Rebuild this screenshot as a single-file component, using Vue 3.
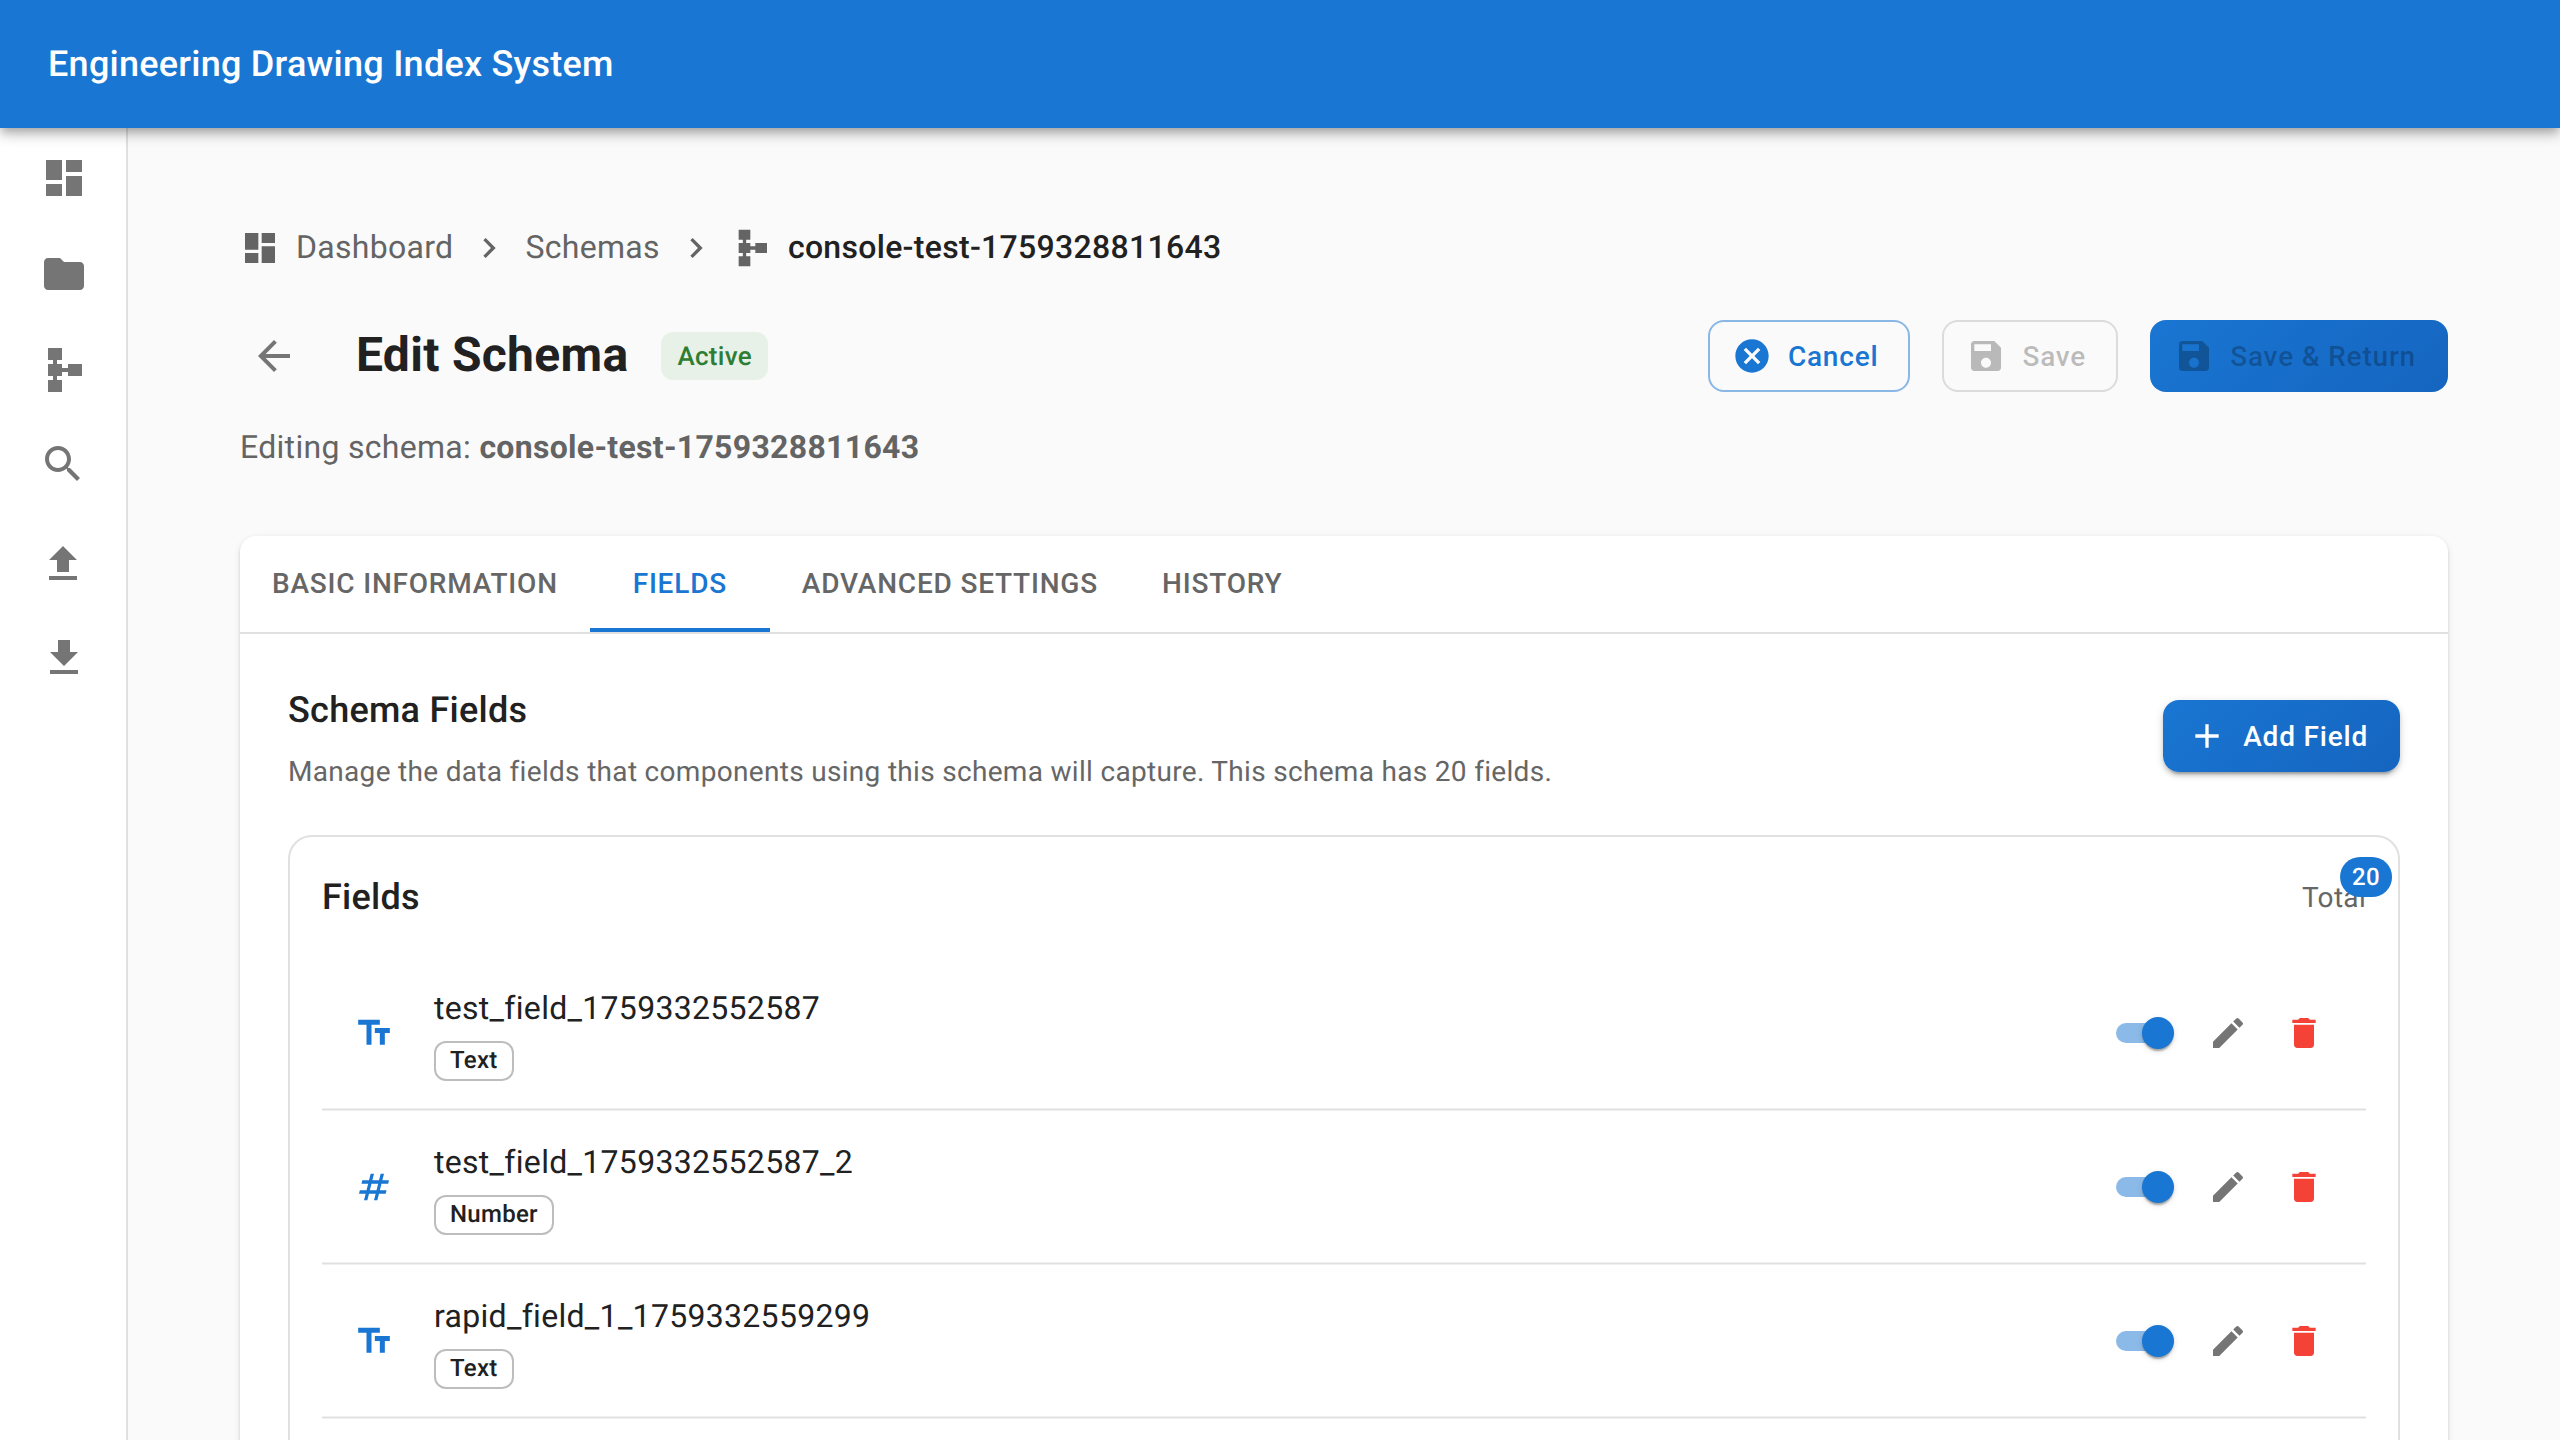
<script setup>
import { ref } from 'vue'

const icons = {
  dashboard: 'M3 13h8V3H3v10zm0 8h8v-6H3v6zm10 0h8V11h-8v10zm0-18v6h8V3h-8z',
  folder: 'M10 4H4c-1.1 0-1.99.9-1.99 2L2 18c0 1.1.9 2 2 2h16c1.1 0 2-.9 2-2V8c0-1.1-.9-2-2-2h-8l-2-2z',
  schema: 'M14 9v2h-3V9H8.5V7H11V1H4v6h2.5v2H4v6h2.5v2H4v6h7v-6H8.5v-2H11v-2h3v2h7V9h-7z',
  search: 'M15.5 14h-.79l-.28-.27C15.41 12.59 16 11.11 16 9.5 16 5.91 13.09 3 9.5 3S3 5.91 3 9.5 5.91 16 9.5 16c1.61 0 3.09-.59 4.23-1.57l.27.28v.79l5 4.99L20.49 19l-4.99-5zm-6 0C7.01 14 5 11.99 5 9.5S7.01 5 9.5 5 14 7.01 14 9.5 11.99 14 9.5 14z',
  upload: 'M5 20h14v-2H5v2zM5 10h4v6h6v-6h4l-7-7-7 7z',
  download: 'M19 9h-4V3H9v6H5l7 7 7-7zM5 18v2h14v-2H5z',
  chevron: 'M10 6 8.59 7.41 13.17 12l-4.58 4.59L10 18l6-6z',
  back: 'M20 11H7.83l5.59-5.59L12 4l-8 8 8 8 1.41-1.41L7.83 13H20v-2z',
  cancel: 'M12 2C6.47 2 2 6.47 2 12s4.47 10 10 10 10-4.47 10-10S17.53 2 12 2zm5 13.59L15.59 17 12 13.41 8.41 17 7 15.59 10.59 12 7 8.41 8.41 7 12 10.59 15.59 7 17 8.41 13.41 12 17 15.59z',
  save: 'M17 3H5c-1.11 0-2 .9-2 2v14c0 1.1.89 2 2 2h14c1.1 0 2-.9 2-2V7l-4-4zm-5 16c-1.66 0-3-1.34-3-3s1.34-3 3-3 3 1.34 3 3-1.34 3-3 3zm3-10H5V5h10v4z',
  add: 'M19 13h-6v6h-2v-6H5v-2h6V5h2v6h6v2z',
  textSize: 'M2.5 4v3h5v12h3V7h5V4h-13zm19 5h-9v3h3v7h3v-7h3V9z',
  hash: 'm20.5 10 .5-2h-4l1-4h-2l-1 4h-4l1-4h-2L9 8H5l-.5 2h4l-1 4h-4L3 16h4l-1 4h2l1-4h4l-1 4h2l1-4h4l.5-2h-4l1-4h4zm-7 4h-4l1-4h4l-1 4z',
  edit: 'M3 17.25V21h3.75L17.81 9.94l-3.75-3.75L3 17.25zM20.71 7.04c.39-.39.39-1.02 0-1.41l-2.34-2.34a.9959.9959 0 0 0-1.41 0l-1.83 1.83 3.75 3.75 1.83-1.83z',
  trash: 'M6 19c0 1.1.9 2 2 2h8c1.1 0 2-.9 2-2V7H6v12zM19 4h-3.5l-1-1h-5l-1 1H5v2h14V4z',
}

const nav = [
  { icon: 'dashboard', box: '0 0 24 24' },
  { icon: 'folder', box: '0 0 24 24' },
  { icon: 'schema', box: '0 0 24 24' },
  { icon: 'search', box: '0.5 1 24 24' },
  { icon: 'upload', box: '0.5 -1 24 24' },
  { icon: 'download', box: '0 0 24 24' },
]

const tabs = ['Basic Information', 'Fields', 'Advanced Settings', 'History']
const activeTab = ref('Fields')

const fields = ref([
  { name: 'test_field_1759332552587', type: 'Text', icon: 'textSize' },
  { name: 'test_field_1759332552587_2', type: 'Number', icon: 'hash' },
  { name: 'rapid_field_1_1759332559299', type: 'Text', icon: 'textSize' },
])
</script>

<template>
  <div class="app">
    <header class="appbar">Engineering Drawing Index System</header>
    <div class="body">
      <nav class="rail">
        <a v-for="item in nav" :key="item.icon" class="rail-item">
          <svg class="i48" :viewBox="item.box"><path :d="icons[item.icon]" /></svg>
        </a>
      </nav>

      <main class="main">
        <div class="crumbs">
          <svg class="i40" viewBox="0 0 24 24"><path :d="icons.dashboard" /></svg>
          <span class="crumb with-icon">Dashboard</span>
          <svg class="i40 sep" viewBox="0 0 24 24"><path :d="icons.chevron" /></svg>
          <span class="crumb">Schemas</span>
          <svg class="i40 sep" viewBox="0 0 24 24"><path :d="icons.chevron" /></svg>
          <svg class="i40" viewBox="0 0 24 24"><path :d="icons.schema" /></svg>
          <span class="crumb with-icon current">console-test-1759328811643</span>
        </div>

        <div class="titlebar">
          <button class="back"><svg class="i48" viewBox="0 0 24 24"><path :d="icons.back" /></svg></button>
          <h1>Edit Schema</h1>
          <span class="status">Active</span>
          <div class="actions">
            <button class="btn outlined"><svg class="i40" viewBox="0 0 24 24"><path :d="icons.cancel" /></svg><span>Cancel</span></button>
            <button class="btn outlined off"><svg class="i40" viewBox="0 0 24 24"><path :d="icons.save" /></svg><span>Save</span></button>
            <button class="btn filled off"><svg class="i40" viewBox="0 0 24 24"><path :d="icons.save" /></svg><span>Save &amp; Return</span></button>
          </div>
        </div>
        <p class="editing">Editing schema: <strong>console-test-1759328811643</strong></p>

        <section class="card">
          <div class="tabs">
            <button
              v-for="t in tabs"
              :key="t"
              class="tab"
              :class="{ active: t === activeTab }"
              @click="activeTab = t"
            >{{ t }}</button>
          </div>
          <div class="panel">
            <div class="panel-head">
              <div class="panel-text">
                <h2>Schema Fields</h2>
                <p class="desc">Manage the data fields that components using this schema will capture. This schema has 20 fields.</p>
              </div>
              <button class="btn filled raised"><svg class="i40" viewBox="0 0 24 24"><path :d="icons.add" /></svg><span>Add Field</span></button>
            </div>

            <div class="list-card">
              <div class="list-head">
                <h2>Fields</h2>
                <span class="total">Total<span class="badge">20</span></span>
              </div>
              <ul class="list">
                <li v-for="f in fields" :key="f.name" class="row">
                  <svg class="i40 type-icon" viewBox="0 0 24 24"><path :d="icons[f.icon]" /></svg>
                  <div class="info">
                    <span class="name">{{ f.name }}</span>
                    <span class="chip">{{ f.type }}</span>
                  </div>
                  <span class="switch"><span class="thumb"></span></span>
                  <button class="icon-btn"><svg class="i40" viewBox="0 0 24 24"><path :d="icons.edit" /></svg></button>
                  <button class="icon-btn danger"><svg class="i40" viewBox="0 0 24 24"><path :d="icons.trash" /></svg></button>
                </li>
              </ul>
            </div>
          </div>
        </section>
      </main>
    </div>
  </div>
</template>

<style>
html,
body {
  margin: 0;
  overflow: hidden;
  background: #fafafa;
}
</style>

<style scoped>
.app {
  width: 2560px;
  height: 1440px;
  overflow: hidden;
  display: flex;
  flex-direction: column;
  font-family: Roboto, sans-serif;
  font-size: 32px;
  line-height: 48px;
  letter-spacing: 0.3px;
  color: #212121;
  background: #fafafa;
  text-rendering: geometricPrecision;
}
*,
*::before,
*::after {
  box-sizing: border-box;
}
h1,
h2,
p,
ul {
  margin: 0;
  padding: 0;
}
button {
  font: inherit;
  letter-spacing: inherit;
  color: inherit;
  border: 0;
  background: none;
  padding: 0;
  margin: 0;
}
svg {
  fill: currentColor;
  flex: none;
  display: block;
}
.i48 {
  width: 48px;
  height: 48px;
}
.i40 {
  width: 40px;
  height: 40px;
}
.appbar {
  height: 128px;
  flex: none;
  display: flex;
  align-items: center;
  padding-left: 48px;
  background: #1976d2;
  color: #fff;
  font-size: 36px;
  font-weight: 500;
  letter-spacing: 0.25px;
  z-index: 2;
  box-shadow: 0 4px 8px -2px rgba(0, 0, 0, 0.2), 0 8px 10px 0 rgba(0, 0, 0, 0.14),
    0 2px 20px 0 rgba(0, 0, 0, 0.12);
}
.body {
  flex: 1;
  min-height: 0;
  display: flex;
}
.rail {
  width: 128px;
  flex: none;
  background: #fff;
  border-right: 2px solid #e0e0e0;
  padding-top: 2px;
}
.rail-item {
  height: 96px;
  padding-left: 40px;
  display: flex;
  align-items: center;
  color: #757575;
}
.main {
  flex: 1;
  padding: 96px 112px 0;
}
.crumbs {
  display: flex;
  align-items: center;
  height: 48px;
  color: #646464;
}
.crumb {
  margin-bottom: 2px;
}
.crumb.with-icon {
  margin-left: 16px;
}
.crumb.current {
  color: #212121;
  font-weight: 500;
}
.sep {
  margin: 0 16px;
}
.titlebar {
  display: flex;
  align-items: center;
  height: 72px;
  margin-top: 48px;
}
.back {
  padding: 16px;
  margin-left: -6px;
  color: #757575;
}
h1 {
  margin: 0 0 3px 42px;
  font-size: 48px;
  line-height: 57px;
  font-weight: 700;
  letter-spacing: 0.3px;
}
.status {
  height: 48px;
  margin-left: 33px;
  padding: 0 16px;
  border-radius: 12px;
  background: #e8f1e8;
  color: #2e7d32;
  font-size: 26px;
  line-height: 50px;
  font-weight: 500;
}
.actions {
  margin-left: auto;
  display: flex;
  gap: 32px;
}
.btn {
  height: 72px;
  padding: 0 32px 0 24px;
  border-radius: 16px;
  display: flex;
  align-items: center;
  gap: 16px;
  font-size: 28px;
  font-weight: 500;
  letter-spacing: 0.8px;
  white-space: nowrap;
}
.btn span {
  margin-top: 2px;
}
.btn.outlined {
  border: 2px solid rgba(25, 118, 210, 0.5);
  padding: 0 30px 0 22px;
  color: #1976d2;
}
.btn.filled {
  background: linear-gradient(135deg, #1976d2, #1565c0);
  color: #fff;
}
.btn.off {
  color: rgba(0, 0, 0, 0.26);
}
.btn.outlined.off {
  border-color: rgba(0, 0, 0, 0.12);
}
.btn.raised {
  box-shadow: 0 6px 2px -4px rgba(0, 0, 0, 0.2), 0 4px 4px 0 rgba(0, 0, 0, 0.14),
    0 2px 10px 0 rgba(0, 0, 0, 0.12);
}
.editing {
  margin-top: 31px;
  color: #646464;
}
.editing strong {
  font-weight: 700;
}
.card {
  margin-top: 65px;
  height: 1400px;
  background: #fff;
  border-radius: 16px;
  box-shadow: 0 4px 2px -2px rgba(0, 0, 0, 0.2), 0 2px 2px 0 rgba(0, 0, 0, 0.14),
    0 2px 6px 0 rgba(0, 0, 0, 0.12);
}
.tabs {
  display: flex;
  height: 98px;
  border-bottom: 2px solid #e0e0e0;
}
.tab {
  height: 96px;
  min-width: 180px;
  padding: 0 32px;
  font-size: 28px;
  font-weight: 500;
  letter-spacing: 0.8px;
  text-transform: uppercase;
  color: #666;
  border-bottom: 4px solid transparent;
  border-top: 4px solid transparent;
}
.tab.active {
  color: #1976d2;
  border-bottom-color: #1976d2;
}
.panel {
  padding: 48px;
}
.panel-head {
  display: flex;
  justify-content: space-between;
  align-items: center;
  height: 108px;
}
.panel-text {
  padding-top: 2px;
}
h2 {
  font-size: 36px;
  line-height: 54px;
  font-weight: 500;
  letter-spacing: 0.27px;
}
.desc {
  margin-top: 15px;
  font-size: 28px;
  line-height: 40px;
  letter-spacing: 0.31px;
  color: #666;
}
.list-card {
  margin-top: 45px;
  height: 1200px;
  border: 2px solid #e0e0e0;
  border-radius: 24px;
  padding: 32px;
}
.list-head {
  display: flex;
  justify-content: space-between;
  align-items: flex-start;
  height: 54px;
  padding-top: 1px;
}
.total {
  position: relative;
  margin-top: 7px;
  font-size: 28px;
  line-height: 42px;
  color: #666;
}
.badge {
  position: absolute;
  left: 100%;
  top: 0;
  transform: translate(-50%, -50%);
  min-width: 40px;
  height: 40px;
  padding: 0 12px;
  border-radius: 20px;
  background: #1976d2;
  color: #fff;
  font-size: 24px;
  line-height: 40px;
  font-weight: 500;
}
.list {
  list-style: none;
  margin-top: 34px;
}
.row {
  display: flex;
  align-items: center;
  height: 154px;
  padding: 0 32px 2px;
  background: linear-gradient(#f0f0f0 0 1px, #e0e0e0 1px 2px, #f0f0f0 2px 3px) bottom / 100% 3px no-repeat;
}
.type-icon {
  color: #1976d2;
  margin-right: 40px;
}
.info {
  flex: 1;
  display: flex;
  flex-direction: column;
  align-items: flex-start;
  gap: 10px;
}
.name {
  line-height: 46px;
}
.chip {
  height: 40px;
  padding: 0 14px;
  border: 2px solid #bdbdbd;
  border-radius: 12px;
  font-size: 24px;
  line-height: 34px;
  font-weight: 500;
}
.switch {
  width: 52px;
  height: 20px;
  margin-right: 30px;
  border-radius: 10px;
  background: #8cbae8;
  display: flex;
  align-items: center;
}
.thumb {
  flex: none;
  width: 32px;
  height: 32px;
  margin-left: 26px;
  border-radius: 50%;
  background: #1976d2;
  box-shadow: 0 4px 2px -2px rgba(0, 0, 0, 0.2), 0 2px 2px 0 rgba(0, 0, 0, 0.14),
    0 2px 6px 0 rgba(0, 0, 0, 0.12);
}
.icon-btn {
  padding: 10px;
  color: #757575;
}
.icon-btn.danger {
  margin-left: 16px;
  color: #f44336;
}
</style>
